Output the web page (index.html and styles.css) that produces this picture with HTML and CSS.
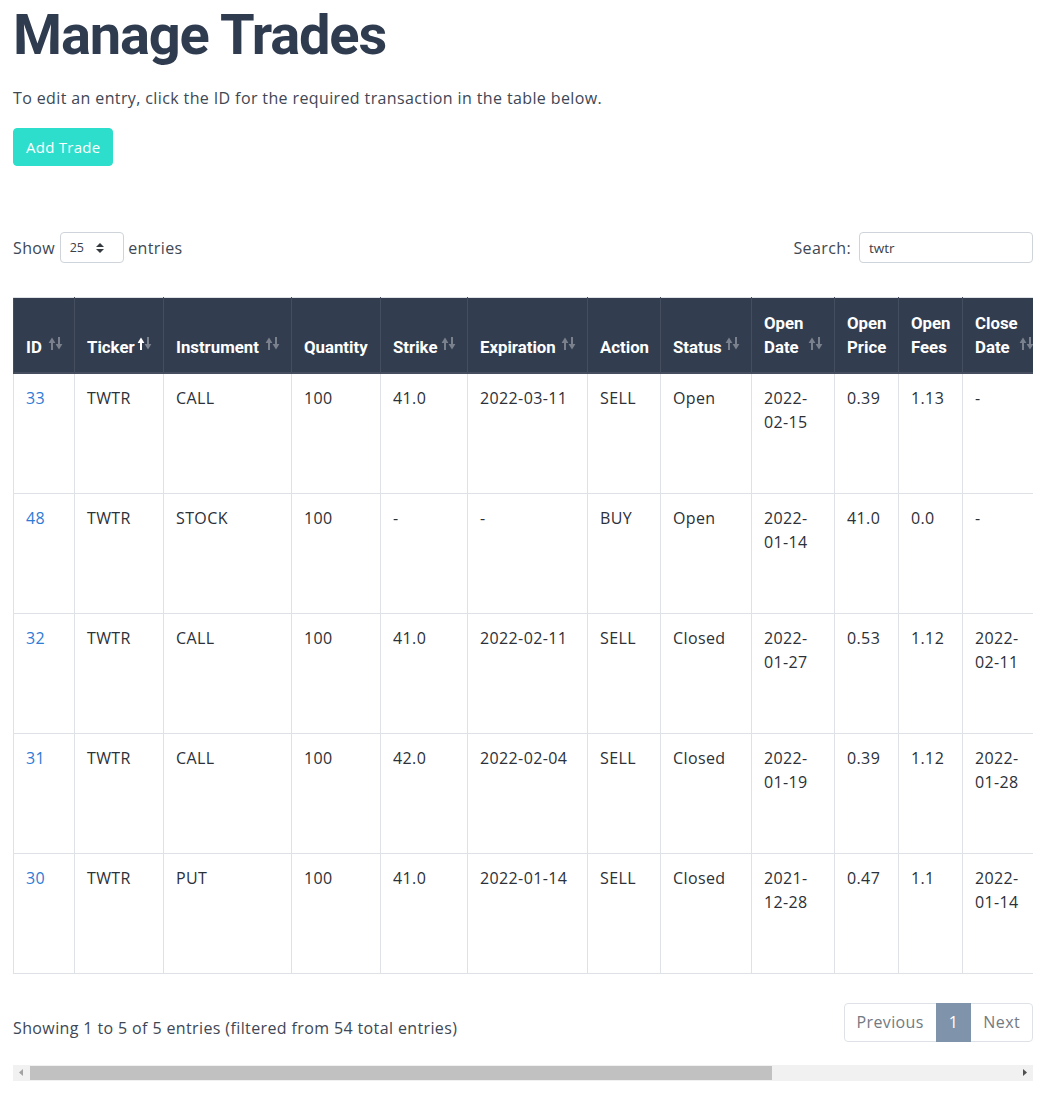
FILE: index.html
```html
<!DOCTYPE html>
<html lang="en">
<head>
<meta charset="utf-8">
<title>Manage Trades</title>
<link rel="stylesheet" href="styles.css">
</head>
<body>
<main class="page">
  <h1 class="title">Manage Trades</h1>
  <p class="lead">To edit an entry, click the ID for the required transaction in the table below.</p>
  <button class="btn-add" type="button">Add Trade</button>

  <div class="dt-wrapper">
    <div class="dt-top">
      <label class="dt-length">Show <span class="select-wrap"><select class="select-sm"><option>25</option><option>50</option><option>100</option></select><svg class="select-caret" viewBox="0 0 4 5" aria-hidden="true"><path d="M2 0L0 2h4zm0 5L0 3h4z"/></svg></span> entries</label>
      <label class="dt-filter">Search:<input class="input-sm" type="search" value="twtr"></label>
    </div>

    <div class="dt-scroll">
      <table class="trades">
        <colgroup>
          <col class="w-id"><col class="w-ticker"><col class="w-instrument"><col class="w-qty"><col class="w-strike"><col class="w-exp"><col class="w-action"><col class="w-status"><col class="w-odate"><col class="w-oprice"><col class="w-ofees"><col class="w-cdate"><col class="w-cprice"><col class="w-cfees"><col class="w-profit"><col class="w-notes">
        </colgroup>
        <thead>
          <tr>
            <th class="sortable">ID<svg class="sort-icon" viewBox="0 0 15 13" aria-hidden="true"><g class="sort-up"><path class="shaft" d="M4 13V4"/><path d="M0.6 6L4 0.6 7.4 6z"/></g><g class="sort-down"><path class="shaft" d="M11 0v9"/><path d="M7.6 7L11 12.4 14.4 7z"/></g></svg></th>
            <th class="sortable asc">Ticker<svg class="sort-icon" viewBox="0 0 15 13" aria-hidden="true"><g class="sort-up"><path class="shaft" d="M4 13V4"/><path d="M0.6 6L4 0.6 7.4 6z"/></g><g class="sort-down"><path class="shaft" d="M11 0v9"/><path d="M7.6 7L11 12.4 14.4 7z"/></g></svg></th>
            <th class="sortable">Instrument<svg class="sort-icon" viewBox="0 0 15 13" aria-hidden="true"><g class="sort-up"><path class="shaft" d="M4 13V4"/><path d="M0.6 6L4 0.6 7.4 6z"/></g><g class="sort-down"><path class="shaft" d="M11 0v9"/><path d="M7.6 7L11 12.4 14.4 7z"/></g></svg></th>
            <th>Quantity</th>
            <th class="sortable">Strike<svg class="sort-icon" viewBox="0 0 15 13" aria-hidden="true"><g class="sort-up"><path class="shaft" d="M4 13V4"/><path d="M0.6 6L4 0.6 7.4 6z"/></g><g class="sort-down"><path class="shaft" d="M11 0v9"/><path d="M7.6 7L11 12.4 14.4 7z"/></g></svg></th>
            <th class="sortable">Expiration<svg class="sort-icon" viewBox="0 0 15 13" aria-hidden="true"><g class="sort-up"><path class="shaft" d="M4 13V4"/><path d="M0.6 6L4 0.6 7.4 6z"/></g><g class="sort-down"><path class="shaft" d="M11 0v9"/><path d="M7.6 7L11 12.4 14.4 7z"/></g></svg></th>
            <th>Action</th>
            <th class="sortable">Status<svg class="sort-icon" viewBox="0 0 15 13" aria-hidden="true"><g class="sort-up"><path class="shaft" d="M4 13V4"/><path d="M0.6 6L4 0.6 7.4 6z"/></g><g class="sort-down"><path class="shaft" d="M11 0v9"/><path d="M7.6 7L11 12.4 14.4 7z"/></g></svg></th>
            <th class="sortable">Open Date<svg class="sort-icon" viewBox="0 0 15 13" aria-hidden="true"><g class="sort-up"><path class="shaft" d="M4 13V4"/><path d="M0.6 6L4 0.6 7.4 6z"/></g><g class="sort-down"><path class="shaft" d="M11 0v9"/><path d="M7.6 7L11 12.4 14.4 7z"/></g></svg></th>
            <th>Open Price</th>
            <th>Open Fees</th>
            <th class="sortable">Close Date<svg class="sort-icon" viewBox="0 0 15 13" aria-hidden="true"><g class="sort-up"><path class="shaft" d="M4 13V4"/><path d="M0.6 6L4 0.6 7.4 6z"/></g><g class="sort-down"><path class="shaft" d="M11 0v9"/><path d="M7.6 7L11 12.4 14.4 7z"/></g></svg></th>
            <th>Close Price</th>
            <th>Close Fees</th>
            <th>Profit</th>
            <th>Notes</th>
          </tr>
        </thead>
        <tbody>
          <tr>
            <td><a href="#">33</a></td><td>TWTR</td><td>CALL</td><td>100</td><td>41.0</td><td>2022-03-11</td><td>SELL</td><td>Open</td><td>2022-02-15</td><td>0.39</td><td>1.13</td><td>-</td><td>-</td><td>-</td><td>-</td><td></td>
          </tr>
          <tr>
            <td><a href="#">48</a></td><td>TWTR</td><td>STOCK</td><td>100</td><td>-</td><td>-</td><td>BUY</td><td>Open</td><td>2022-01-14</td><td>41.0</td><td>0.0</td><td>-</td><td>-</td><td>-</td><td>-</td><td></td>
          </tr>
          <tr>
            <td><a href="#">32</a></td><td>TWTR</td><td>CALL</td><td>100</td><td>41.0</td><td>2022-02-11</td><td>SELL</td><td>Closed</td><td>2022-01-27</td><td>0.53</td><td>1.12</td><td>2022-02-11</td><td>0.0</td><td>0.0</td><td>51.88</td><td></td>
          </tr>
          <tr>
            <td><a href="#">31</a></td><td>TWTR</td><td>CALL</td><td>100</td><td>42.0</td><td>2022-02-04</td><td>SELL</td><td>Closed</td><td>2022-01-19</td><td>0.39</td><td>1.12</td><td>2022-01-28</td><td>0.02</td><td>1.12</td><td>34.76</td><td></td>
          </tr>
          <tr>
            <td><a href="#">30</a></td><td>TWTR</td><td>PUT</td><td>100</td><td>41.0</td><td>2022-01-14</td><td>SELL</td><td>Closed</td><td>2021-12-28</td><td>0.47</td><td>1.1</td><td>2022-01-14</td><td>0.0</td><td>0.0</td><td>45.9</td><td></td>
          </tr>
        </tbody>
      </table>
    </div>

    <div class="dt-bottom">
      <div class="dt-info">Showing 1 to 5 of 5 entries (filtered from 54 total entries)</div>
      <ul class="pagination">
        <li class="page-item disabled"><span class="page-link">Previous</span></li>
        <li class="page-item active"><span class="page-link">1</span></li>
        <li class="page-item disabled"><span class="page-link">Next</span></li>
      </ul>
    </div>

    <div class="hscroll" aria-hidden="true">
      <span class="hscroll-btn"><svg class="hscroll-arrow off" viewBox="0 0 4 7"><path d="M4 0v7L0 3.5z"/></svg></span>
      <span class="hscroll-track"><span class="hscroll-thumb"></span></span>
      <span class="hscroll-btn"><svg class="hscroll-arrow" viewBox="0 0 4 7"><path d="M0 0v7l4-3.5z"/></svg></span>
    </div>
  </div>
</main>
</body>
</html>
```
FILE: styles.css
```css
* { box-sizing: border-box; }

html, body {
  margin: 0;
  padding: 0;
  background: #ffffff;
}

body {
  font-family: "Open Sans", "Liberation Sans", sans-serif;
  font-size: 16px;
  line-height: 1.5;
  letter-spacing: 0.38px;
  color: #3e4754;
}

.page {
  padding: 0 20px 0 13px;
}

.title {
  margin: 0 0 17px;
  padding-top: 2px;
  font-family: Roboto, "Liberation Sans", sans-serif;
  font-size: 56px;
  line-height: 1.2;
  font-weight: 700;
  letter-spacing: -1.15px;
  color: #2f3b4f;
}

.lead {
  margin: 0 0 18px;
}

.btn-add {
  display: inline-block;
  font-family: inherit;
  font-size: 15px;
  line-height: 24px;
  letter-spacing: 0.25px;
  color: #ffffff;
  background: #2cdecb;
  border: 1px solid #2cdecb;
  border-radius: 4px;
  padding: 6px 12px;
  cursor: pointer;
}

/* DataTables wrapper */
.dt-wrapper {
  margin-top: 66px;
  overflow: hidden;
}

.dt-top {
  display: flex;
  justify-content: space-between;
  align-items: center;
  height: 31px;
}

.dt-length,
.dt-filter {
  display: flex;
  align-items: center;
  white-space: pre;
}

.select-wrap {
  position: relative;
  display: inline-block;
  height: 31px;
}

.select-sm {
  -webkit-appearance: none;
  appearance: none;
  width: 64px;
  height: 31px;
  padding: 0 24px 0 9px;
  font-family: "Open Sans", "Liberation Sans", sans-serif;
  font-size: 12.5px;
  color: #3a4048;
  background: #ffffff;
  border: 1px solid #ced4da;
  border-radius: 4px;
}

.select-caret {
  position: absolute;
  right: 20px;
  top: 11px;
  width: 8px;
  height: 10px;
  fill: #343a40;
  pointer-events: none;
}

.input-sm {
  margin-left: 8px;
  width: 174px;
  height: 31px;
  padding: 0 9px;
  font-family: "Open Sans", "Liberation Sans", sans-serif;
  font-size: 13.5px;
  color: #3a4048;
  background: #ffffff;
  border: 1px solid #ced4da;
  border-radius: 4px;
}

/* Table */
.dt-scroll {
  margin-top: 34px;
  overflow: hidden;
}

.trades {
  width: 1357px;
  table-layout: fixed;
  border-collapse: collapse;
  color: #2c3038;
  border: 1px solid #dee2e6;
}

.w-id { width: 61px; }
.w-ticker { width: 89px; }
.w-instrument { width: 128px; }
.w-qty { width: 89px; }
.w-strike { width: 87px; }
.w-exp { width: 120px; }
.w-action { width: 73px; }
.w-status { width: 91px; }
.w-odate { width: 83px; }
.w-oprice { width: 64px; }
.w-ofees { width: 64px; }
.w-cdate { width: 83px; }
.w-cprice { width: 64px; }
.w-cfees { width: 64px; }
.w-profit { width: 75px; }
.w-notes { width: 122px; }

.trades th,
.trades td {
  padding: 12px;
  border: 1px solid #dee2e6;
  text-align: left;
}

.trades thead th {
  position: relative;
  padding-top: 13px;
  padding-bottom: 13px;
  vertical-align: bottom;
  font-family: Roboto, "Liberation Sans", sans-serif;
  font-size: 16.8px;
  line-height: 24px;
  font-weight: 700;
  letter-spacing: 0;
  color: #ffffff;
  background: #323d4f;
  border-color: #444e5f;
  border-top-color: #dee2e6;
  border-bottom-width: 2px;
}

.trades tbody tr {
  height: 120px;
}

.trades td {
  vertical-align: top;
}

.trades a {
  color: #2e7bd6;
  text-decoration: none;
}

.sort-icon {
  position: absolute;
  right: 11px;
  bottom: 22px;
  width: 15px;
  height: 13px;
  color: #ffffff;
}

.sort-icon .shaft {
  fill: none;
  stroke: currentColor;
  stroke-width: 2;
}

.sort-icon g {
  fill: currentColor;
  opacity: 0.35;
}

.asc .sort-icon .sort-up {
  opacity: 1;
}

/* Bottom */
.dt-bottom {
  display: flex;
  justify-content: space-between;
  align-items: flex-start;
  margin-top: 29px;
  padding-bottom: 23px;
}

.dt-info {
  padding-top: 13px;
}

.pagination {
  display: flex;
  list-style: none;
  margin: 0;
  padding: 0;
}

.page-link {
  display: block;
  padding: 8px 12px;
  line-height: 21px;
  margin-left: -1px;
  color: #737a82;
  background: #ffffff;
  border: 1px solid #dee2e6;
}

.page-item:first-child .page-link {
  margin-left: 0;
  border-radius: 4px 0 0 4px;
}

.page-item:last-child .page-link {
  border-radius: 0 4px 4px 0;
}

.page-item.active .page-link {
  color: #ffffff;
  background: #7f93ab;
  border-color: #7f93ab;
  position: relative;
}

/* Horizontal scrollbar */
.hscroll {
  display: flex;
  height: 16px;
  background: #f1f1f1;
}

.hscroll-btn {
  flex: 0 0 16px;
  display: flex;
  align-items: center;
  justify-content: center;
}

.hscroll-arrow {
  width: 4px;
  height: 7px;
  fill: #505050;
}

.hscroll-arrow.off {
  fill: #a3a3a3;
}

.hscroll-track {
  flex: 1 1 auto;
  display: flex;
  align-items: center;
  padding-left: 1px;
}

.hscroll-thumb {
  display: block;
  width: 742px;
  height: 14px;
  background: #c1c1c1;
}
```
